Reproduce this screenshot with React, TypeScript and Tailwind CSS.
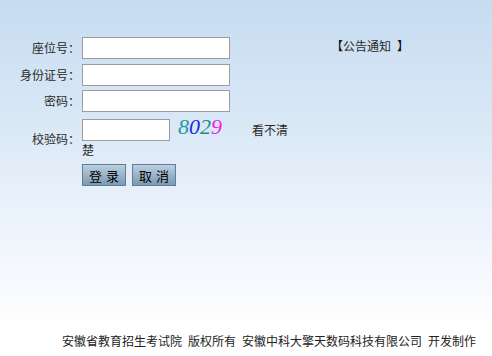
import React from "react";

const font = { fontFamily: '"Noto Sans CJK SC", "Liberation Sans", sans-serif' };

function Field({ label, children, className = "" }: { label: string; children: React.ReactNode; className?: string }) {
  return (
    <div className={`flex items-center ${className}`}>
      <span className="w-[80px] -mr-[4px] text-right text-[12px] leading-none text-[#2a2a2a]">{label}</span>
      <div className="ml-[6px] flex">{children}</div>
    </div>
  );
}

const inputCls = "block h-[22px] border border-[#9c9c9c] bg-white outline-none text-[12px] px-1";

function Btn({ children }: { children: React.ReactNode }) {
  return (
    <button className="h-[22px] w-[44px] border border-[#5f7f99] bg-gradient-to-b from-[#bccfdf] to-[#7b99b1] text-[13px] leading-none tracking-[4px] pl-[4px] text-black">
      {children}
    </button>
  );
}

export default function App() {
  return (
    <div
      className="flex h-screen w-full flex-col bg-[linear-gradient(to_bottom,#c6dcf1_0%,#dae8f6_35%,#ecf3fc_62%,#f9fafe_82%,#ffffff_92%)]"
      style={font}
    >
      <div className="flex pt-[37px]">
        <div className="flex w-[331px] shrink-0 flex-col">
          <Field label="座位号：">
            <input className={`${inputCls} w-[148px]`} />
          </Field>
          <Field label="身份证号：" className="mt-[5px]">
            <input className={`${inputCls} w-[148px]`} />
          </Field>
          <Field label="密码：" className="mt-[4px]">
            <input type="password" className={`${inputCls} w-[148px]`} />
          </Field>
          <Field label="校验码：" className="mt-[7px]">
            <div className="flex flex-col">
              <div className="flex items-start">
                <input className={`${inputCls} w-[88px]`} />
                <span
                  className="ml-[8px] -mt-[3px] text-[22px] italic leading-none"
                  style={{ fontFamily: '"Liberation Serif", serif' }}
                >
                  <span className="text-[#1b9aa6]">8</span>
                  <span className="text-[#2424f0]">0</span>
                  <span className="text-[#1a8c8c]">2</span>
                  <span className="text-[#f020f0]">9</span>
                </span>
                <span className="ml-[30px] mt-[5px] text-[12px] leading-none text-[#2a2a2a]">看不清</span>
              </div>
              <span className="mt-[1px] text-[12px] leading-[16px] text-[#2a2a2a]">楚</span>
            </div>
          </Field>
          <div className="ml-[82px] mt-[6px] flex gap-[6px]">
            <Btn>登录</Btn>
            <Btn>取消</Btn>
          </div>
        </div>
        <div className="mt-[3px] flex text-[12px] leading-none text-[#2a2a2a]">
          <span className="text-[#111]">【</span>
          <span>公告通知</span>
          <span className="ml-[6px] text-[#111]">】</span>
        </div>
      </div>
      <div className="mt-auto mb-[9px] flex pl-[62px] text-[12px] leading-none text-[#222]">
        <span>安徽省教育招生考试院</span>
        <span className="ml-[6px]">版权所有</span>
        <span className="ml-[6px]">安徽中科大擎天数码科技有限公司</span>
        <span className="ml-[6px]">开发制作</span>
      </div>
    </div>
  );
}
